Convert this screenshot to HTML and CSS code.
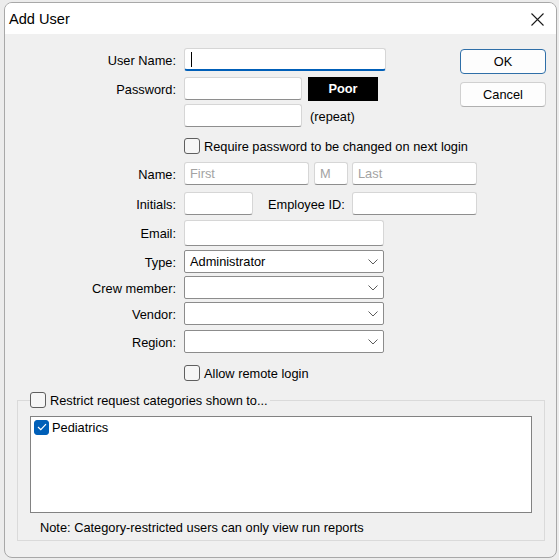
FILE: index.html
```html
<!DOCTYPE html>
<html lang="en">
<head>
  <meta charset="UTF-8">
  <meta name="viewport" content="width=device-width, initial-scale=1.0">
  <title>Add User</title>
  <link rel="stylesheet" href="styles.css">
</head>
<body>
  <div class="window">
    <div class="titlebar">
      <span class="title">Add User</span>
      <svg class="close" width="13" height="13" viewBox="0 0 13 13">
        <path d="M0.5 0.5L12.5 12.5M12.5 0.5L0.5 12.5" stroke="#1b1b1b" stroke-width="1.1" fill="none"/>
      </svg>
    </div>

    <div class="content">
      <div class="form">
        <div class="row r-user">
          <span class="lbl">User Name:</span>
          <div class="field w-user focused"><span class="caret"></span></div>
        </div>

        <div class="actions">
          <button class="btn btn-default">OK</button>
          <button class="btn">Cancel</button>
        </div>

        <div class="row r-pass">
          <span class="lbl">Password:</span>
          <div class="field w-pass"></div>
          <div class="strength">Poor</div>
        </div>

        <div class="row r-repeat">
          <span class="lbl"></span>
          <div class="field w-pass"></div>
          <span class="hint">(repeat)</span>
        </div>

        <div class="row row-check r-require">
          <span class="lbl"></span>
          <span class="check"></span>
          <span>Require password to be changed on next login</span>
        </div>

        <div class="row r-name">
          <span class="lbl">Name:</span>
          <div class="field w-first placeholder">First</div>
          <div class="field w-mid placeholder">M</div>
          <div class="field w-last placeholder">Last</div>
        </div>

        <div class="row r-initials">
          <span class="lbl">Initials:</span>
          <div class="field w-initials"></div>
          <span class="lbl-inline">Employee ID:</span>
          <div class="field w-last"></div>
        </div>

        <div class="row row-tall r-email">
          <span class="lbl">Email:</span>
          <div class="field w-email"></div>
        </div>

        <div class="row r-type">
          <span class="lbl">Type:</span>
          <div class="combo">
            <span>Administrator</span>
            <svg width="10" height="6" viewBox="0 0 10 6"><path d="M0.5 0.5L5 5L9.5 0.5" stroke="#5c5c5c" fill="none"/></svg>
          </div>
        </div>

        <div class="row r-crew">
          <span class="lbl">Crew member:</span>
          <div class="combo">
            <span></span>
            <svg width="10" height="6" viewBox="0 0 10 6"><path d="M0.5 0.5L5 5L9.5 0.5" stroke="#5c5c5c" fill="none"/></svg>
          </div>
        </div>

        <div class="row r-vendor">
          <span class="lbl">Vendor:</span>
          <div class="combo">
            <span></span>
            <svg width="10" height="6" viewBox="0 0 10 6"><path d="M0.5 0.5L5 5L9.5 0.5" stroke="#5c5c5c" fill="none"/></svg>
          </div>
        </div>

        <div class="row r-region">
          <span class="lbl">Region:</span>
          <div class="combo">
            <span></span>
            <svg width="10" height="6" viewBox="0 0 10 6"><path d="M0.5 0.5L5 5L9.5 0.5" stroke="#5c5c5c" fill="none"/></svg>
          </div>
        </div>

        <div class="row row-check r-remote">
          <span class="lbl"></span>
          <span class="check"></span>
          <span>Allow remote login</span>
        </div>
      </div>

      <fieldset class="group">
        <legend><span class="check"></span>Restrict request categories shown to...</legend>
        <div class="list">
          <div class="item">
            <span class="check checked">
              <svg width="10" height="8" viewBox="0 0 10 8"><path d="M1 4L3.8 6.6L9 1.2" stroke="#fff" stroke-width="1.2" fill="none"/></svg>
            </span>
            Pediatrics
          </div>
        </div>
        <p class="note">Note: Category-restricted users can only view run reports</p>
      </fieldset>
    </div>
  </div>
</body>
</html>
```

FILE: styles.css
```css
body {
  margin: 0;
  background-color: #ececec;
  font-family: "Liberation Sans", Arial, sans-serif;
  font-size: 12.8px;
  color: #000;
}
.window {
  box-sizing: border-box;
  width: 553px;
  height: 556px;
  margin: 2px 0 0 4px;
  border: 1px solid #a8a8a8;
  border-radius: 8px;
  background-color: #f0f0f0;
  overflow: hidden;
}
.titlebar {
  height: 31px;
  background-color: #fff;
  display: flex;
  align-items: center;
  justify-content: space-between;
  padding: 0 12px 0 4px;
}
.title {
  font-size: 14.6px;
  margin-top: 1px;
}
.close {
  margin-top: 1px;
}

/* form */
.form {
  display: grid;
  grid-template-columns: 1fr 86px;
  padding-right: 10px;
}
.row {
  grid-column: 1 / -1;
  display: flex;
  align-items: center;
  height: 23px;
  line-height: 15px;
}
.row > span {
  padding-top: 1px;
}
.row-check {
  height: 16px;
}
.row-tall {
  height: 26px;
}
.r-user { grid-column: 1; margin-top: 14px; }
.r-pass { grid-column: 1; margin-top: 6px; }
.r-repeat { grid-column: 1; margin-top: 4px; }
.r-require { margin-top: 11px; }
.r-name { margin-top: 8px; }
.r-initials { margin-top: 7px; }
.r-email { margin-top: 5px; }
.r-type { margin-top: 4px; }
.r-crew { margin-top: 3px; }
.r-vendor { margin-top: 3px; }
.r-region { margin-top: 5px; }
.r-remote { margin-top: 12px; }

.lbl {
  flex: none;
  width: 171px;
  margin-right: 8px;
  text-align: right;
}
.lbl-inline {
  margin: 0 7px 0 15px;
}
.field {
  flex: none;
  box-sizing: border-box;
  height: 100%;
  padding: 0 5px;
  background-color: #fff;
  border: 1px solid #d6d6d6;
  border-bottom-color: #8e8e8e;
  border-radius: 3px;
  display: flex;
  align-items: center;
}
.placeholder {
  color: #a3a3a3;
}
.focused {
  border-bottom: 2px solid #005fb8;
}
.row > .field > .caret {
  width: 1px;
  height: 15px;
  padding: 0;
  background-color: #000;
  margin-left: 1px;
}
.w-user { width: 202px; }
.w-pass { width: 118px; }
.w-first { width: 125px; }
.w-mid { width: 34px; margin-left: 5px; }
.w-last { width: 125px; margin-left: 4px; }
.w-initials { width: 69px; }
.r-initials .w-last { margin-left: 0; }
.w-email { width: 200px; }

.strength {
  width: 70px;
  height: 24px;
  margin-left: 6px;
  background-color: #000;
  color: #fff;
  font-weight: bold;
  display: flex;
  align-items: center;
  justify-content: center;
}
.hint {
  margin-left: 8px;
}

.combo {
  box-sizing: border-box;
  width: 200px;
  height: 100%;
  padding: 0 5px 0 5px;
  background-color: #fff;
  border: 1px solid #8c8c8c;
  border-radius: 2px;
  display: flex;
  align-items: center;
  justify-content: space-between;
}

.check {
  flex: none;
  box-sizing: border-box;
  width: 16px;
  height: 16px;
  margin-right: 4px;
  border: 1px solid #5f5f5f;
  border-radius: 3px;
  background-color: #f6f6f6;
  display: inline-flex;
  align-items: center;
  justify-content: center;
  vertical-align: middle;
}
.row > .check {
  padding: 0;
}
.checked {
  background-color: #005fb8;
  border-color: #005fb8;
}

/* buttons */
.actions {
  grid-column: 2;
  grid-row: 1 / span 3;
  display: flex;
  flex-direction: column;
  gap: 8px;
  margin-top: 15px;
}
.btn {
  box-sizing: border-box;
  width: 86px;
  height: 25px;
  font-family: inherit;
  font-size: 12.8px;
  background-color: #fdfdfd;
  border: 1px solid #d0d0d0;
  border-bottom-color: #b0b0b0;
  border-radius: 4px;
  padding: 0;
}
.btn-default {
  border: 1px solid #2f6fa8;
}

/* category group */
.group {
  margin: 11px 11px 0 12px;
  padding: 8px 12px 4px 12px;
  border: 1px solid #dadada;
  min-inline-size: 0;
}
.group legend {
  padding: 0 2px 0 0;
  height: 16px;
  display: flex;
  align-items: center;
}
.list {
  box-sizing: border-box;
  height: 97px;
  background-color: #fff;
  border: 1px solid #828282;
  padding: 2px 3px;
}
.item {
  display: flex;
  align-items: center;
  height: 16px;
}
.item .check {
  width: 15px;
  height: 15px;
  margin-right: 3px;
}
.note {
  margin: 7px 0 0 10px;
  line-height: 16px;
}
```
